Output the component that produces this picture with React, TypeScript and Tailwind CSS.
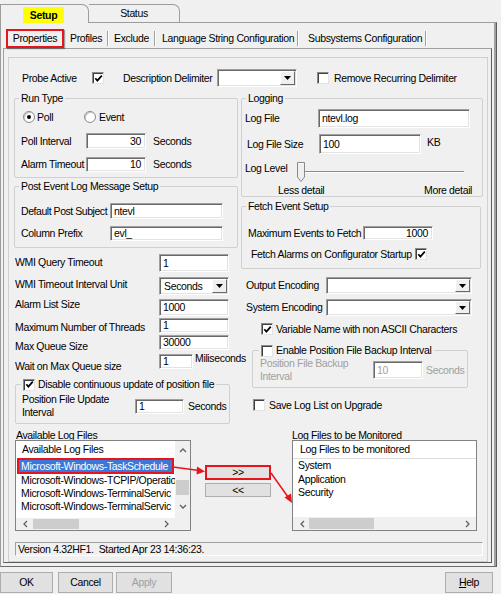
import React from "react";

const sunken =
  "bg-white border border-t-[#a0a0a0] border-l-[#a0a0a0] border-r-white border-b-white shadow-[inset_1px_1px_0_#696969,inset_-1px_-1px_0_#e3e3e3]";

function Field({
  cls,
  value = "",
  right = false,
  gray = false,
}: {
  cls: string;
  value?: string;
  right?: boolean;
  gray?: boolean;
}) {
  return (
    <div
      className={`${sunken} ${cls} shrink-0 flex items-center overflow-hidden whitespace-nowrap ${
        right ? "justify-end pr-[4px]" : "pl-[3px]"
      } ${gray ? "text-[#a0a0a0]" : ""}`}
    >
      {value}
    </div>
  );
}

function Select({ cls, value = "" }: { cls: string; value?: string }) {
  return (
    <div className={`${sunken} ${cls} shrink-0 flex items-stretch p-[1px]`}>
      <div className="flex-1 pl-[3px] flex items-center">{value}</div>
      <div className="w-[15px] bg-[#f0f0f0] border border-t-white border-l-white border-r-[#696969] border-b-[#696969] flex items-center justify-center">
        <svg width="7" height="4" viewBox="0 0 7 4">
          <path d="M0 0 H7 L3.5 4 Z" fill="#000" />
        </svg>
      </div>
    </div>
  );
}

function Check({ checked = false }: { checked?: boolean }) {
  return (
    <div className="w-[12px] h-[12px] shrink-0 bg-white border border-t-[#8a8a8a] border-l-[#8a8a8a] border-r-[#e3e3e3] border-b-[#e3e3e3] shadow-[inset_1px_1px_0_#404040] flex items-center justify-center">
      {checked && (
        <svg width="9" height="9" viewBox="0 0 9 9">
          <path d="M1.3 4.2 L3.4 6.6 L7.8 1.6" stroke="#000" strokeWidth="1.7" fill="none" />
        </svg>
      )}
    </div>
  );
}

function Radio({ on = false }: { on?: boolean }) {
  return (
    <div className="w-[12px] h-[12px] shrink-0 rounded-full bg-white border border-[#8a8a8a] shadow-[inset_1px_1px_0_#c8c8c8] flex items-center justify-center">
      {on && <div className="w-[4px] h-[4px] rounded-full bg-black" />}
    </div>
  );
}

function Sep() {
  return <div className="w-[2px] h-[15px] shrink-0 border-l border-l-[#a0a0a0] border-r border-r-white" />;
}

function Chev({ dir }: { dir: "up" | "down" | "left" | "right" }) {
  const d =
    dir === "up"
      ? "M1 5 L4 2 L7 5"
      : dir === "down"
      ? "M1 2 L4 5 L7 2"
      : dir === "left"
      ? "M5 1 L2 4 L5 7"
      : "M2 1 L5 4 L2 7";
  return (
    <svg width="8" height="8" viewBox="0 0 8 8" className="shrink-0">
      <path d={d} stroke="#606060" strokeWidth="1.3" fill="none" />
    </svg>
  );
}

function Slider() {
  return (
    <svg width="167" height="20" viewBox="0 0 167 20" className="shrink-0">
      <line x1="8" y1="9.5" x2="167" y2="9.5" stroke="#8a8a8a" strokeWidth="1" />
      <line x1="8" y1="10.5" x2="167" y2="10.5" stroke="#ffffff" strokeWidth="1" />
      <path d="M0.5 0.5 H7.5 V15 L4 19.5 L0.5 15 Z" fill="#f0f0f0" stroke="#8a8a8a" strokeWidth="1" />
      <path d="M1.5 1.5 H6.5" stroke="#ffffff" strokeWidth="1" />
    </svg>
  );
}

function Btn({ cls, children, gray = false }: { cls: string; children: React.ReactNode; gray?: boolean }) {
  return (
    <div
      className={`${cls} shrink-0 bg-[#e1e1e1] border border-[#adadad] flex items-center justify-center ${
        gray ? "text-[#a0a0a0]" : ""
      }`}
    >
      {children}
    </div>
  );
}

export default function App() {
  return (
    <div className="relative w-[501px] h-[594px] overflow-hidden bg-[#f0f0f0] text-black text-[10.5px] leading-[13px] tracking-[-0.35px] font-['Liberation_Sans',Arial,sans-serif]">
      {/* top tabs */}
      <div className="flex items-end h-[22px]">
        <div className="relative z-10 w-[89px] h-[19px] mb-[-1px] bg-[#f0f0f0] border-t border-l border-r border-[#9c9c9c] rounded-tr-[7px] flex items-end">
          <div className="ml-[22px] w-[41px] h-[16px] bg-[#ffff00] flex items-center justify-center font-bold">
            Setup
          </div>
        </div>
        <div className="w-[91px] h-[18px] border-t border-r border-[#9c9c9c] rounded-tr-[7px] flex items-center justify-center">
          Status
        </div>
      </div>

      {/* setup panel */}
      <div className="w-[497px] h-[545px] border border-[#9c9c9c] border-r-[#5a5a5a] border-b-[#6a6a6a] shadow-[inset_-2px_0_0_#a0a0a0]">
        {/* sub tabs */}
        <div className="flex items-center mt-[6px] h-[19px]">
          <div className="ml-[5px] w-[58px] h-[19px] shrink-0 border-2 border-[#e8141b] shadow-[1px_1px_1px_rgba(0,0,0,0.35)] flex items-center justify-center">
            Properties
          </div>
          <div className="w-[43px] pl-[6px] shrink-0">Profiles</div>
          <Sep />
          <div className="w-[45px] pl-[5px] shrink-0">Exclude</div>
          <Sep />
          <div className="w-[141px] pl-[6px] shrink-0 whitespace-nowrap">Language String Configuration</div>
          <Sep />
          <div className="w-[126px] pl-[9px] shrink-0 whitespace-nowrap">Subsystems Configuration</div>
          <Sep />
        </div>

        {/* properties panel */}
        <div className="ml-[2px] w-[489px] h-[515px] border border-[#a0a0a0] border-r-[#5a5a5a] border-b-[#5a5a5a]">
          <div className="mt-[8px] ml-[4px] w-[480px] h-[505px] border border-[#d0d0d0]">
            {/* Row A */}
            <div className="flex items-center h-[18px] mt-[11px]">
              <span className="ml-[13px] w-[70px] shrink-0">Probe Active</span>
              <Check checked />
              <span className="ml-[19px] w-[94px] shrink-0">Description Delimiter</span>
              <Select cls="w-[80px] h-[18px]" />
              <div className="ml-[20px]">
                <Check />
              </div>
              <span className="ml-[5px]">Remove Recurring Delimiter</span>
            </div>

            {/* Section B */}
            <div className="flex mt-[5px] h-[337px]">
              {/* left column */}
              <div className="ml-[5px] w-[224px] shrink-0 flex flex-col">
                <fieldset className="w-[224px] h-[86px] border border-[#d0d0d0] rounded-[2px]">
                  <legend className="ml-[4px] px-[2px] leading-[13px]">Run Type</legend>
                  <div className="flex items-center mt-[5px] h-[14px]">
                    <div className="ml-[8px] w-[61px] flex items-center">
                      <Radio on />
                      <span className="ml-[2px]">Poll</span>
                    </div>
                    <Radio />
                    <span className="ml-[3px]">Event</span>
                  </div>
                  <div className="flex items-center mt-[9px] h-[16px]">
                    <span className="ml-[6px] w-[65px] shrink-0">Poll Interval</span>
                    <Field cls="w-[60px] h-[16px]" value="30" right />
                    <span className="ml-[7px]">Seconds</span>
                  </div>
                  <div className="flex items-center mt-[8px] h-[15px]">
                    <span className="ml-[6px] w-[65px] shrink-0">Alarm Timeout</span>
                    <Field cls="w-[60px] h-[15px]" value="10" right />
                    <span className="ml-[7px]">Seconds</span>
                  </div>
                </fieldset>

                <fieldset className="mt-[2px] w-[224px] h-[68px] border border-[#d0d0d0] rounded-[2px]">
                  <legend className="ml-[4px] px-[2px] leading-[13px]">Post Event Log Message Setup</legend>
                  <div className="flex items-center mt-[10px] h-[16px]">
                    <span className="ml-[6px] w-[89px] shrink-0 whitespace-nowrap tracking-[-0.45px]">Default Post Subject</span>
                    <Field cls="w-[113px] h-[16px]" value="ntevl" />
                  </div>
                  <div className="flex items-center mt-[7px] h-[15px]">
                    <span className="ml-[6px] w-[89px] shrink-0">Column Prefix</span>
                    <Field cls="w-[113px] h-[15px]" value="evl_" />
                  </div>
                </fieldset>

                <div className="flex h-[125px]">
                  <div className="ml-[1px] w-[144px] shrink-0 flex flex-col whitespace-nowrap">
                    <span className="mt-[8px]">WMI Query Timeout</span>
                    <span className="mt-[9px]">WMI Timeout Interval Unit</span>
                    <span className="mt-[7px]">Alarm List Size</span>
                    <span className="mt-[10px]">Maximum Number of Threads</span>
                    <span className="mt-[6px]">Max Queue Size</span>
                    <span className="mt-[7px]">Wait on Max Queue size</span>
                  </div>
                  <div className="flex flex-col">
                    <div className="mt-[6px]">
                      <Field cls="w-[70px] h-[18px]" value="1" />
                    </div>
                    <div className="mt-[5px]">
                      <Select cls="w-[70px] h-[18px]" value="Seconds" />
                    </div>
                    <div className="mt-[4px]">
                      <Field cls="w-[70px] h-[17px]" value="1000" />
                    </div>
                    <div className="mt-[2px]">
                      <Field cls="w-[70px] h-[15px]" value="1" />
                    </div>
                    <div className="mt-[2px]">
                      <Field cls="w-[70px] h-[15px]" value="30000" />
                    </div>
                    <div className="mt-[4px] flex items-start">
                      <Field cls="w-[34px] h-[15px]" value="1" />
                      <span className="ml-[2px] mt-[-2px]">Miliseconds</span>
                    </div>
                  </div>
                </div>

                <fieldset className="mt-[5px] ml-[1px] w-[215px] h-[46px] border border-[#d0d0d0] rounded-[2px]">
                  <legend className="ml-[5px] px-[2px] leading-[13px]">
                    <div className="flex items-center h-[13px]">
                      <Check checked />
                      <span className="ml-[3px] whitespace-nowrap">Disable continuous update of position file</span>
                    </div>
                  </legend>
                  <div className="flex items-center mt-[2px] h-[26px]">
                    <span className="ml-[6px] w-[113px] shrink-0">
                      Position File Update
                      <br />
                      Interval
                    </span>
                    <Field cls="w-[49px] h-[15px]" value="1" />
                    <span className="ml-[4px]">Seconds</span>
                  </div>
                </fieldset>
              </div>

              {/* right column */}
              <div className="ml-[3px] w-[242px] shrink-0 flex flex-col">
                <fieldset className="w-[242px] h-[105px] border border-[#d0d0d0] rounded-[2px]">
                  <legend className="ml-[4px] px-[2px] leading-[13px]">Logging</legend>
                  <div className="flex items-center mt-[4px] h-[19px]">
                    <span className="ml-[3px] w-[73px] shrink-0">Log File</span>
                    <Field cls="w-[152px] h-[19px]" value="ntevl.log" />
                  </div>
                  <div className="flex items-start mt-[6px] h-[20px]">
                    <span className="ml-[5px] w-[72px] shrink-0 self-center">Log File Size</span>
                    <Field cls="w-[102px] h-[20px]" value="100" />
                    <span className="ml-[6px] mt-[2px]">KB</span>
                  </div>
                  <div className="flex items-start mt-[8px] h-[20px]">
                    <span className="ml-[3px] w-[52px] shrink-0">Log Level</span>
                    <Slider />
                  </div>
                  <div className="flex mt-[2px]">
                    <span className="ml-[36px] w-[146px] shrink-0">Less detail</span>
                    <span>More detail</span>
                  </div>
                </fieldset>

                <fieldset className="mt-[3px] w-[240px] h-[69px] border border-[#d0d0d0] rounded-[2px]">
                  <legend className="ml-[4px] px-[2px] leading-[13px]">Fetch Event Setup</legend>
                  <div className="flex items-center mt-[13px] h-[14px]">
                    <span className="ml-[6px] w-[115px] shrink-0 whitespace-nowrap">Maximum Events to Fetch</span>
                    <Field cls="w-[70px] h-[14px]" value="1000" right />
                  </div>
                  <div className="flex items-center mt-[8px] h-[12px]">
                    <span className="ml-[9px] w-[164px] shrink-0 whitespace-nowrap">
                      Fetch Alarms on Configurator Startup
                    </span>
                    <Check checked />
                  </div>
                </fieldset>

                <div className="flex items-center mt-[8px] h-[17px]">
                  <span className="ml-[5px] w-[80px] shrink-0 whitespace-nowrap">Output Encoding</span>
                  <Select cls="w-[146px] h-[17px]" />
                </div>
                <div className="flex items-center mt-[5px] h-[17px]">
                  <span className="ml-[5px] w-[80px] shrink-0 whitespace-nowrap">System Encoding</span>
                  <Select cls="w-[146px] h-[17px]" />
                </div>
                <div className="flex items-center mt-[7px] h-[12px]">
                  <div className="ml-[20px]">
                    <Check checked />
                  </div>
                  <span className="ml-[3px] whitespace-nowrap">Variable Name with non ASCII Characters</span>
                </div>

                <fieldset className="mt-[9px] ml-[11px] w-[216px] h-[44px] border border-[#d0d0d0] rounded-[2px]">
                  <legend className="ml-[6px] px-[2px] leading-[13px]">
                    <div className="flex items-center h-[13px]">
                      <Check />
                      <span className="ml-[3px] whitespace-nowrap">Enable Position File Backup Interval</span>
                    </div>
                  </legend>
                  <div className="flex items-center h-[26px] text-[#a0a0a0]">
                    <span className="ml-[7px] w-[113px] shrink-0">
                      Position File Backup
                      <br />
                      Interval
                    </span>
                    <Field cls="w-[50px] h-[18px]" value="10" gray />
                    <span className="ml-[3px]">Seconds</span>
                  </div>
                </fieldset>

                <div className="flex items-center mt-[11px] h-[12px]">
                  <div className="ml-[12px]">
                    <Check />
                  </div>
                  <span className="ml-[4px] whitespace-nowrap">Save Log List on Upgrade</span>
                </div>
              </div>
            </div>

            {/* Section C : lists */}
            <div className="flex h-[102px]">
              <div className="ml-[6px] w-[176px] shrink-0 flex flex-col">
                <div className="h-[11px] pl-[1px] whitespace-nowrap">Available Log Files</div>
                <div className="w-[176px] h-[91px] bg-white border border-[#828282] flex flex-col overflow-hidden">
                  <div className="flex h-[77px]">
                    <div className="w-[159px] shrink-0 flex flex-col overflow-hidden whitespace-nowrap">
                      <div className="h-[17px] shrink-0 pl-[6px] flex items-center">
                        Available Log Files
                      </div>
                      <div className="ml-[1px] w-[157px] h-[16px] shrink-0 border-2 border-[#e8141b] bg-[#3c78d8] text-white pl-[2px] flex items-center overflow-hidden">
                        Microsoft-Windows-TaskSchedule
                      </div>
                      <div className="h-[13px] shrink-0 pl-[5px] flex items-center">
                        Microsoft-Windows-TCPIP/Operatio
                      </div>
                      <div className="h-[13px] shrink-0 pl-[5px] flex items-center">
                        Microsoft-Windows-TerminalServic
                      </div>
                      <div className="h-[13px] shrink-0 pl-[5px] flex items-center">
                        Microsoft-Windows-TerminalServic
                      </div>
                    </div>
                    <div className="w-[15px] shrink-0 bg-[#f0f0f0] flex flex-col items-center">
                      <div className="mt-[6px]">
                        <Chev dir="up" />
                      </div>
                      <div className="mt-[25px] w-[13px] h-[15px] bg-[#cdcdcd]" />
                      <div className="mt-[8px]">
                        <Chev dir="down" />
                      </div>
                    </div>
                  </div>
                  <div className="flex h-[12px] bg-[#f0f0f0] items-center">
                    <div className="ml-[6px]">
                      <Chev dir="left" />
                    </div>
                    <div className="ml-[3px] w-[46px] h-[10px] bg-[#cdcdcd]" />
                    <div className="ml-[84px]">
                      <Chev dir="right" />
                    </div>
                  </div>
                </div>
              </div>

              <div className="ml-[14px] w-[66px] shrink-0 flex flex-col">
                <div className="mt-[36px] w-[66px] h-[15px] bg-[#e1e1e1] border-2 border-[#e8141b] flex items-center justify-center">
                  &gt;&gt;
                </div>
                <div className="mt-[3px] w-[66px] h-[14px] bg-[#e1e1e1] border border-[#adadad] flex items-center justify-center">
                  &lt;&lt;
                </div>
              </div>

              <div className="ml-[21px] w-[185px] shrink-0 flex flex-col">
                <div className="h-[11px] whitespace-nowrap">Log Files to be Monitored</div>
                <div className="w-[185px] h-[91px] bg-white border border-[#828282] flex flex-col overflow-hidden whitespace-nowrap">
                  <div className="h-[18px] shrink-0 pl-[7px] flex items-center border-b border-[#dcdcdc]">
                    Log Files to be monitored
                  </div>
                  <div className="h-[13.5px] shrink-0 pl-[5px] flex items-center">System</div>
                  <div className="h-[13.5px] shrink-0 pl-[5px] flex items-center">Application</div>
                  <div className="h-[13.5px] shrink-0 pl-[5px] flex items-center">Security</div>
                  <div className="mt-auto flex h-[13px] bg-[#f0f0f0] items-center">
                    <div className="ml-[6px]">
                      <Chev dir="left" />
                    </div>
                    <div className="ml-[2px] w-[65px] h-[11px] bg-[#cdcdcd]" />
                    <div className="ml-[90px]">
                      <Chev dir="right" />
                    </div>
                  </div>
                </div>
              </div>
            </div>

            {/* status */}
            <div className="mt-[11px] ml-[6px] w-[468px] h-[14px] border border-t-[#a0a0a0] border-l-[#a0a0a0] border-r-white border-b-white flex items-center pl-[2px] whitespace-pre">
              Version 4.32HF1.  Started Apr 23 14:36:23.
            </div>
          </div>
        </div>
      </div>

      {/* bottom buttons */}
      <div className="flex mt-[5px] h-[21px]">
        <Btn cls="w-[53px] h-[21px] border-[#707070]">OK</Btn>
        <div className="ml-[5px]">
          <Btn cls="w-[55px] h-[21px]">Cancel</Btn>
        </div>
        <div className="ml-[3px]">
          <Btn cls="w-[56px] h-[21px]" gray>
            Apply
          </Btn>
        </div>
        <div className="ml-auto mr-[8px]">
          <Btn cls="w-[48px] h-[21px]">
            <span>
              <span className="underline">H</span>elp
            </span>
          </Btn>
        </div>
      </div>

      {/* red annotation arrows */}
      <svg className="absolute left-0 top-0 pointer-events-none" width="501" height="594" viewBox="0 0 501 594">
        <line x1="173" y1="467" x2="199" y2="470.5" stroke="#e8141b" strokeWidth="1.5" />
        <path d="M205 471.5 L197 466.5 L196.5 474.5 Z" fill="#e8141b" />
        <line x1="271" y1="473" x2="288" y2="497" stroke="#e8141b" strokeWidth="1.5" />
        <path d="M292 503 L284.5 497.5 L291 493.5 Z" fill="#e8141b" />
      </svg>
    </div>
  );
}
